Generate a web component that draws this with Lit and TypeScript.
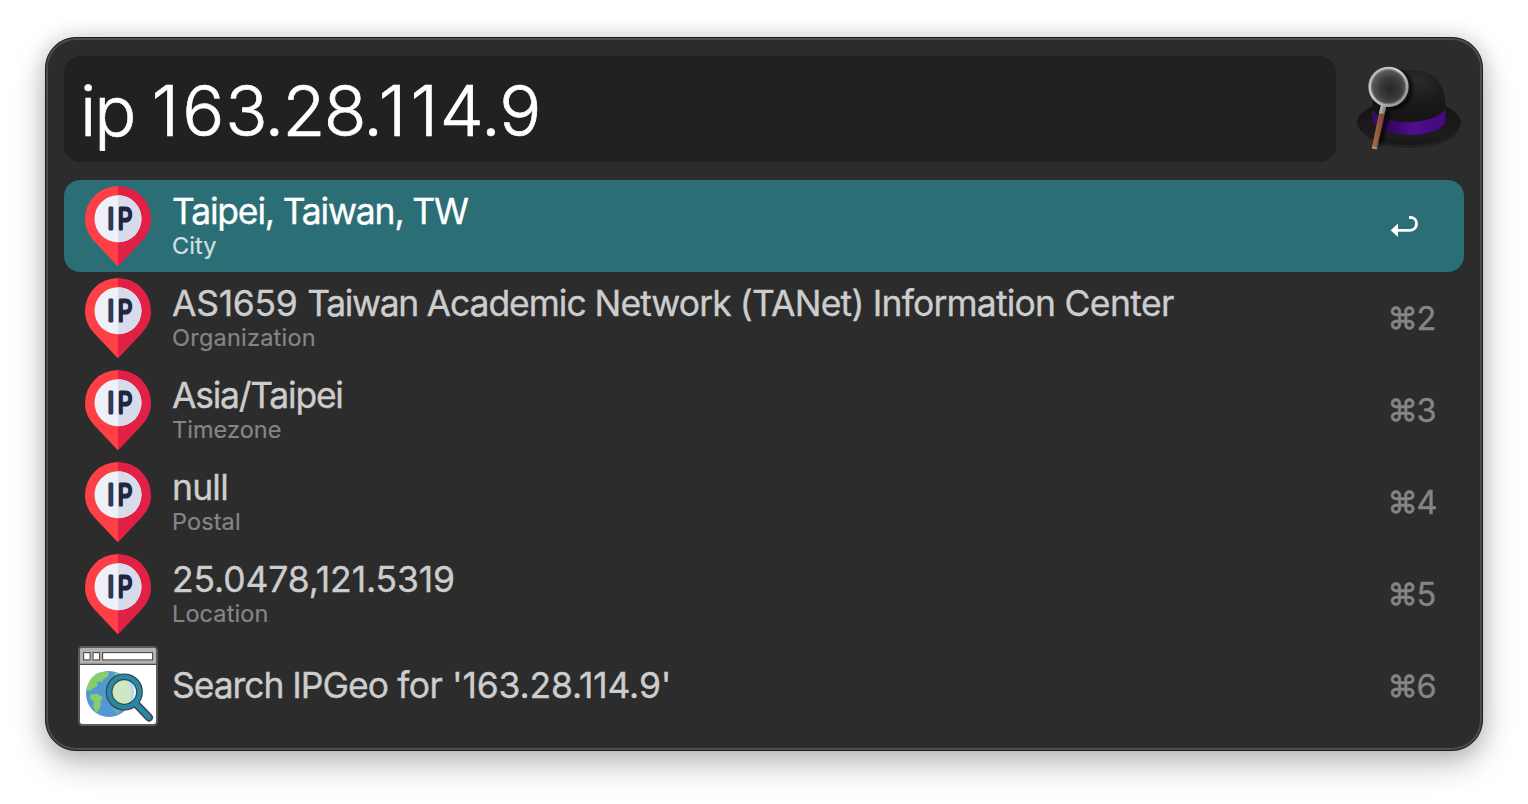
import { LitElement, html, css, svg, nothing } from "lit";
import { customElement, property } from "lit/decorators.js";
import { styleMap } from "lit/directives/style-map.js";

interface Run {
  text: string;
  track: number;
}

interface Result {
  icon: "pin" | "web";
  title: Run[];
  subtitle?: Run;
  key?: string;
}

const keyword: Run[] = [
  { text: "i", track: -2.2 },
  { text: "p", track: -3 },
  { text: " ", track: -1.4 },
];

const address: Run[] = [
  { text: "1", track: 3.1 },
  { text: "6", track: 0.85 },
  { text: "3", track: -3.1 },
  { text: ".", track: -1.8 },
  { text: "2", track: -1.7 },
  { text: "8", track: -3.4 },
  { text: ".", track: -4.1 },
  { text: "1", track: 4.1 },
  { text: "1", track: 1.8 },
  { text: "4", track: -3 },
  { text: ".", track: -1.5 },
  { text: "9", track: 0 },
];

const results: Result[] = [
  { icon: "pin", title: [{ text: "Taipei, Taiwan, TW", track: -1.18 }], subtitle: { text: "City", track: 0.1 } },
  {
    icon: "pin",
    title: [
      { text: "AS1659 ", track: -0.3 },
      { text: "Taiwan ", track: -1.36 },
      { text: "Academic ", track: -1.04 },
      { text: "Network ", track: -0.93 },
      { text: "(TANet) ", track: -0.8 },
      { text: "Information ", track: -0.8 },
      { text: "Center", track: -0.6 },
    ],
    subtitle: { text: "Organization", track: 0.23 },
    key: "2",
  },
  { icon: "pin", title: [{ text: "Asia/Taipei", track: -1.25 }], subtitle: { text: "Timezone", track: 0.05 }, key: "3" },
  { icon: "pin", title: [{ text: "null", track: -0.8 }], subtitle: { text: "Postal", track: 0.1 }, key: "4" },
  { icon: "pin", title: [{ text: "25.0478,121.5319", track: -0.13 }], subtitle: { text: "Location", track: 0.1 }, key: "5" },
  {
    icon: "web",
    title: [
      { text: "Search ", track: -1.08 },
      { text: "IPGeo ", track: -0.95 },
      { text: "for ", track: -0.5 },
      { text: "'163.28.114.9'", track: -0.17 },
    ],
    key: "6",
  },
];

const run = (r: Run) => html`<span style=${styleMap({ letterSpacing: `${r.track}px` })}>${r.text}</span>`;

@customElement("ip-pin")
class IpPin extends LitElement {
  static styles = css`
    :host { display: block; width: 80px; height: 80px; -webkit-text-stroke: 0; }
    svg { display: block; }
    .letter { font: 300 29px Inter, sans-serif; stroke-width: 2.8; stroke-linejoin: round; }
    .i { fill: #2f3a56; stroke: #2f3a56; text-anchor: middle; }
    .p { fill: #1f2740; stroke: #1f2740; stroke-width: 3; }
  `;
  render() {
    return html`<svg width="80" height="80" viewBox="0 0 80 80">
      <path d="M40 0A33 33 0 0 0 7 33C7 43 11 49 16 55L38.8 79.3Q39.4 80 40 80Z" fill="#ff3f46" />
      <path d="M40 0A33 33 0 0 1 73 33C73 43 69 49 64 55L41.2 79.3Q40.6 80 40 80Z" fill="#e02145" />
      <circle cx="40" cy="32.8" r="23.5" fill="#eef1f8" />
      <path d="M40 9.3A23.5 23.5 0 0 1 40 56.3Z" fill="#d8dcea" />
      <text class="letter i" x="32.8" y="43.4">I</text>
      <text class="letter p" x="39.8" y="43.4" textLength="14.6" lengthAdjust="spacingAndGlyphs">P</text>
    </svg>`;
  }
}

@customElement("web-search")
class WebSearch extends LitElement {
  static styles = css`
    :host { display: block; width: 80px; height: 80px; }
    svg { display: block; }
  `;
  render() {
    return html`<svg width="80" height="80" viewBox="0 0 80 80">
      <rect x="1" y="1" width="78" height="78" rx="3.500" fill="#fff" stroke="#5a5a5a" stroke-width="2" />
      <path d="M2 4.500Q2 2 4.500 2H75.500Q78 2 78 4.500V17.500H2Z" fill="#b3b3b3" />
      <path d="M2 18.300H78" stroke="#4c4c4c" stroke-width="1.600" />
      <g fill="#fff" stroke="#4c4c4c" stroke-width="1.100">
        <rect x="5.600" y="6.600" width="6.500" height="7.300" />
        <rect x="15" y="6.600" width="6.500" height="7.300" />
        <rect x="24.600" y="6.600" width="50" height="7.300" />
      </g>
      <circle cx="31" cy="48" r="23" fill="#5398d2" />
      <g fill="#86cd6c">
        <path d="M9.300 41C11.500 33 16 28 21.500 26.500Q27 24.800 31 26.500L30.500 30 25.300 33.300 24.500 36.500 22 35.500 18.700 36.700 19.500 40 15.300 42.300 12.500 45 8.800 44Z" />
        <path d="M12.700 48.300L19.300 47.700 25 51.300 22.500 54.700 22.700 59 20.700 64.700 18 66.500 15.300 61 15.800 56 12 52.300Z" />
        <path d="M36 26.500C44 28.500 49 33 51.500 38L45 45 36 42 35 36 38 31Z" />
        <path d="M33 56L44 61 40 68Q36 66 33 56Z" opacity=".45" />
      </g>
      <path d="M60 60L71 71.500" stroke="#39414a" stroke-width="8" stroke-linecap="round" />
      <circle cx="46.300" cy="46" r="13" fill="#cde9c3" />
      <path d="M48 34C54 40 55 50 51 57A12 12 0 0 0 48 34Z" fill="#bcd6ed" />
      <path d="M54 34A14 14 0 0 1 54 58Q58 46 54 34Z" fill="#e8f2fa" />
      <circle cx="46.300" cy="46" r="15.200" fill="none" stroke="#39414a" stroke-width="6.800" />
      <path d="M58 58L71 71.500" stroke="#2789a4" stroke-width="5.200" stroke-linecap="round" />
      <circle cx="46.300" cy="46" r="15.200" fill="none" stroke="#2789a4" stroke-width="4.600" />
    </svg>`;
  }
}

@customElement("hat-logo")
class HatLogo extends LitElement {
  static styles = css`
    :host { display: block; width: 110px; height: 92px; }
    svg { display: block; }
  `;
  render() {
    return html`<svg width="110" height="92" viewBox="1354 62 110 92">
      <defs>
        <radialGradient id="dome" cx=".62" cy=".2" r=".8">
          <stop offset="0" stop-color="#2b292a" /><stop offset=".5" stop-color="#1b191a" /><stop offset="1" stop-color="#151314" />
        </radialGradient>
        <linearGradient id="brim" x2="0" y2="1">
          <stop offset="0" stop-color="#121111" /><stop offset=".8" stop-color="#1f1c1d" /><stop offset="1" stop-color="#171515" />
        </linearGradient>
        <linearGradient id="band">
          <stop offset="0" stop-color="#3d0872" /><stop offset=".25" stop-color="#35085f" /><stop offset=".55" stop-color="#500d8e" /><stop offset="1" stop-color="#42097c" />
        </linearGradient>
        <radialGradient id="glass" cx=".55" cy=".55" r=".58">
          <stop offset="0" stop-color="#262626" /><stop offset=".5" stop-color="#3a3a3a" /><stop offset="1" stop-color="#686868" />
        </radialGradient>
        <linearGradient id="rim" x2="1" y2="1">
          <stop offset="0" stop-color="#aaa" /><stop offset=".4" stop-color="#d0d0d0" /><stop offset="1" stop-color="#858585" />
        </linearGradient>
        <linearGradient id="wood">
          <stop offset="0" stop-color="#a8744c" /><stop offset="1" stop-color="#734525" />
        </linearGradient>
        <filter id="soft" x="-50%" y="-50%" width="200%" height="200%"><feGaussianBlur stdDeviation="1.800" /></filter>
      </defs>
      <ellipse cx="1410" cy="126.500" rx="49" ry="21.500" fill="#212121" />
      <ellipse cx="1409" cy="122.500" rx="52" ry="22.500" fill="url(#brim)" />
      <path d="M1372 116C1371 87 1384 70 1412 70C1437 70 1447 87 1445.500 112L1443 120C1430 127 1390 128 1373 121Z" fill="url(#dome)" />
      <path d="M1372 109C1380 126 1432 127 1445.800 109L1445.500 123C1435 139 1384 139 1373 122Z" fill="url(#band)" />
      <g filter="url(#soft)" opacity=".65">
        <circle cx="1392" cy="89" r="19" fill="none" stroke="#000" stroke-width="4" />
        <path d="M1388 112L1380 145" stroke="#000" stroke-width="5" />
      </g>
      <circle cx="1388.500" cy="87" r="18.500" fill="url(#glass)" />
      <path d="M1383.800 105L1381.500 114" stroke="#8c8c8c" stroke-width="5.500" />
      <path d="M1382.300 105L1380 114" stroke="#b8b8b8" stroke-width="2" />
      <circle cx="1388.500" cy="86.800" r="18.800" fill="none" stroke="url(#rim)" stroke-width="2.600" />
      <circle cx="1388.500" cy="86.800" r="17" fill="none" stroke="#808080" stroke-width="1" />
      <path d="M1379 113.300L1384.600 114.500L1376.800 149L1371.800 148Z" fill="url(#wood)" />
      <path d="M1372 147.700L1376.900 148.700" stroke="#b9aaa0" stroke-width="1.200" />
    </svg>`;
  }
}

const returnArrow = svg`
  <path d="M1409 217.500H1411C1418.500 217.500 1418.500 230.300 1410 230.300H1396" fill="none" stroke="currentColor" stroke-width="2.800" />
  <path d="M1390.700 230.300L1398 223.500V237Z" fill="currentColor" />`;

@customElement("result-row")
class ResultRow extends LitElement {
  @property({ attribute: false }) result!: Result;
  @property({ type: Boolean, reflect: true }) selected = false;

  static styles = css`
    :host {
      display: grid;
      grid-template-columns: 80px 1fr 74px;
      align-items: center;
      column-gap: 14px;
      box-sizing: border-box;
      height: 92px;
      padding-left: 14px;
      border-radius: 16px;
      color: #cdcdcd;
    }
    :host([selected]) { background: #2b6e75; color: #fff; }
    .text { display: flex; flex-direction: column; white-space: pre; }
    .title { font-size: 35.500px; line-height: 40px; -webkit-text-stroke: 0.35px currentColor; }
    .sub { font-size: 23.500px; line-height: 28px; color: #858585; -webkit-text-stroke: 0.2px currentColor; }
    :host([selected]) .sub { color: #cfe0e2; }
    .key {
      display: flex;
      align-items: baseline;
      margin-left: -2.5px;
      padding-top: 2px;
      font-size: 32.500px;
      line-height: 40px;
      color: #858585;
      -webkit-text-stroke: 0.35px currentColor;
    }
    .cmd { margin-right: -1.3px; font-size: 30.500px; font-weight: 500; transform: translateY(-0.7px); }
    .arrow { display: block; color: #fff; }
  `;

  render() {
    const r = this.result;
    return html`
      ${r.icon === "pin" ? html`<ip-pin></ip-pin>` : html`<web-search></web-search>`}
      <div class="text">
        <div class="title">${r.title.map(run)}</div>
        ${r.subtitle ? html`<div class="sub">${run(r.subtitle)}</div>` : nothing}
      </div>
      ${r.key
        ? html`<div class="key"><span class="cmd">⌘</span><span>${r.key}</span></div>`
        : html`<svg class="arrow" width="30" height="24" viewBox="1390 214 30 24">${returnArrow}</svg>`}
    `;
  }
}

@customElement("app-root")
class AppRoot extends LitElement {
  static styles = css`
    :host {
      display: block;
      box-sizing: border-box;
      width: 1528px;
      height: 804px;
      padding: 37px 45px 53px;
      overflow: hidden;
      background: #fff;
      font-family: Inter, "Liberation Sans", sans-serif;
    }
    .window {
      box-sizing: border-box;
      height: 714px;
      padding: 18px;
      border: 1px solid #1b1b1b;
      border-radius: 31px;
      background: #2c2c2c;
      box-shadow: inset 0 0 0 2px #4d4d4d, 0 12px 32px rgba(0, 0, 0, .27), 0 0 20px rgba(0, 0, 0, .12);
    }
    .bar { display: flex; gap: 18px; height: 106px; margin-bottom: 18px; }
    .query {
      flex: none;
      box-sizing: border-box;
      width: 1272px;
      padding: 10px 16px 0;
      border-radius: 16px;
      background: #212121;
      color: #fff;
      font-size: 70px;
      font-weight: 300;
      line-height: 90px;
      white-space: pre;
      -webkit-text-stroke: 0.7px currentColor;
    }
    .address { font-kerning: none; }
    hat-logo { margin-top: 6px; }
  `;

  render() {
    return html`<div class="window">
      <div class="bar">
        <div class="query">${keyword.map(run)}<span class="address">${address.map(run)}</span></div>
        <hat-logo></hat-logo>
      </div>
      ${results.map((r, i) => html`<result-row .result=${r} ?selected=${i === 0}></result-row>`)}
    </div>`;
  }
}
